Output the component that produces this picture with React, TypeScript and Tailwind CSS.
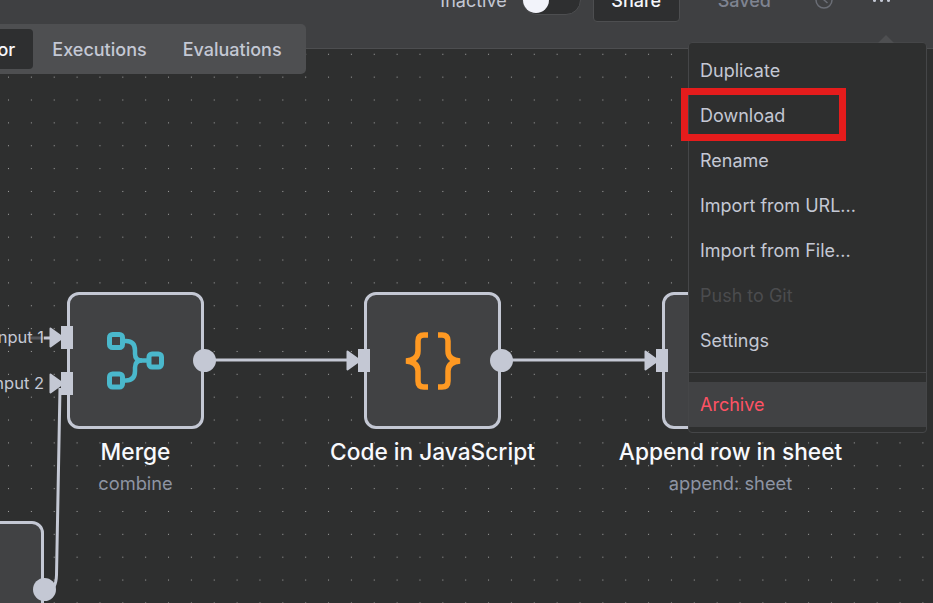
import React from "react";

const font = { fontFamily: "Inter, 'Noto Sans', sans-serif" };

function InPort({ label, top }: { label?: string; top: number }) {
  return (
    <div className="absolute left-[-9px] w-[12px] h-[23px] bg-[#c4c8d4]" style={{ top }}>
      <svg className="absolute left-[-12px] top-0 overflow-visible" width="12" height="23" viewBox="0 0 12 23">
        <path d="M1.5 2.5 L14 11.5 L1.5 20.5 Z" fill="#c4c8d4" stroke="#c4c8d4" strokeWidth="2" strokeLinejoin="round" />
      </svg>
      {label && (
        <span className="absolute right-[29px] top-0 whitespace-nowrap text-[16.5px] leading-[23px] text-[#c4c8d4]">{label}</span>
      )}
    </div>
  );
}

function Node({
  x,
  y,
  title,
  sub,
  icon,
  inputs,
  output,
}: {
  x: number;
  y: number;
  title?: string;
  sub?: string;
  icon?: React.ReactNode;
  inputs?: { label?: string; top: number }[];
  output?: boolean;
}) {
  return (
    <div
      className="absolute w-[137px] h-[137px] rounded-[12px] border-[3px] border-[#c4c8d4] bg-[#414244] flex items-center justify-center"
      style={{ left: x, top: y }}
    >
      {icon}
      {inputs?.map((p, i) => <InPort key={i} {...p} />)}
      {output && <div className="absolute right-[-15px] top-[54px] w-[23px] h-[23px] rounded-full bg-[#c4c8d4]" />}
      {title && (
        <div className="absolute top-[142px] left-1/2 -translate-x-1/2 flex flex-col items-center whitespace-nowrap">
          <span className="text-[22.7px] leading-[30px] font-medium text-[#f8f9fd]">{title}</span>
          {sub && <span className="text-[18.3px] leading-[30px] mt-[1px] text-[#8d94a3]">{sub}</span>}
        </div>
      )}
    </div>
  );
}

function MergeIcon() {
  return (
    <svg width="60" height="60" viewBox="0 0 60 60" fill="none" stroke="#4ab8cc" strokeWidth="5">
      <rect x="3.5" y="3.5" width="13" height="13" rx="3" />
      <rect x="43" y="23" width="12.5" height="13" rx="3" />
      <rect x="3.5" y="43" width="13" height="13" rx="3" />
      <path d="M16 10 H20 Q29 10 29 19.5 V23 Q29 29.5 36 29.5 H43" strokeWidth="4.5" />
      <path d="M36 29.5 Q29 29.5 29 36.5 V40 Q29 49.5 20 49.5 H16" strokeWidth="4.5" />
    </svg>
  );
}

function BracesIcon() {
  return (
    <svg width="56" height="58" viewBox="0 0 56 58" fill="none" stroke="#ff9922" strokeWidth="5.5">
      <path d="M23 3 H19 Q13 3 13 9 V19 Q13 28 1 29 Q13 30 13 39 V49 Q13 55 19 55 H23" />
      <path d="M33 3 H37 Q43 3 43 9 V19 Q43 28 55 29 Q43 30 43 39 V49 Q43 55 37 55 H33" />
    </svg>
  );
}

const items = ["Duplicate", "Download", "Rename", "Import from URL...", "Import from File..."];

export default function App() {
  return (
    <div className="relative w-[933px] h-[603px] overflow-hidden flex flex-col bg-[#2e2f2f]" style={font}>
      <header className="box-border h-[49px] pb-[48px] flex items-center justify-end bg-[#3f4042] border-b border-[#4d4e50] text-[18px]">
        <span className="text-[#c4c8d4] mr-[15px]">Inactive</span>
        <div className="relative w-[59px] h-[30px] rounded-full bg-[#2e2f30] border border-[#4d4e50] mr-[12px]">
          <div className="absolute left-[0px] top-[1px] w-[26px] h-[26px] rounded-full bg-[#f2f3fa]" />
        </div>
        <div className="w-[87px] h-[43px] mr-[38px] rounded-[4px] bg-[#2e2f30] border border-[#4d4e50] flex items-center justify-center font-medium text-[#f5f6fa]">
          Share
        </div>
        <span className="font-medium text-[#7f8491] mr-[43px]">Saved</span>
        <svg className="mr-[39px]" width="20" height="20" viewBox="0 0 20 20" fill="none" stroke="#6b6e76" strokeWidth="1.5">
          <circle cx="10" cy="10" r="8" />
          <path d="M10 5 V10 L13.5 13" />
        </svg>
        <div className="flex gap-[4px] mr-[43px]">
          <i className="w-[3px] h-[3px] rounded-full bg-[#c4c8d4]" />
          <i className="w-[3px] h-[3px] rounded-full bg-[#c4c8d4]" />
          <i className="w-[3px] h-[3px] rounded-full bg-[#c4c8d4]" />
        </div>
      </header>

      <main className="relative flex-1 bg-[radial-gradient(circle,#a0a0a0_0.7px,transparent_1px)] bg-[length:22.86px_22.86px] bg-[position:-2.93px_-6.15px]">
        <svg className="absolute left-0 top-[-49px]" width="933" height="603" fill="none" stroke="#c4c8d4" strokeWidth="3">
          <path d="M204 360 H350" />
          <path d="M501 360 H648" />
          <path d="M28 338 H44" stroke="#55565a" />
          <path d="M44 338 H50" />
          <path d="M48 590 Q56 590 56.5 575 L60 388" />
        </svg>
        <Node x={-93} y={472} output />
        <Node x={67} y={243} title="Merge" sub="combine" icon={<MergeIcon />} output
          inputs={[{ label: "Input 1", top: 31 }, { label: "Input 2", top: 77 }]} />
        <Node x={364} y={243} title="Code in JavaScript" icon={<BracesIcon />} output inputs={[{ top: 54 }]} />
        <Node x={662} y={243} title="Append row in sheet" sub="append: sheet" inputs={[{ top: 54 }]} />
      </main>

      <nav className="absolute left-[-58px] top-[24px] h-[50px] p-[5px] pr-[6px] flex items-center rounded-[5px] bg-[#4e4f51] text-[18px] font-medium">
        <span className="h-[40px] px-[18px] flex items-center rounded-[4px] bg-[#2e2f30] text-[#f5f6fa] mr-[1px]">Editor</span>
        <span className="h-[40px] px-[18px] flex items-center text-[#c4c8d4]">Executions</span>
        <span className="h-[40px] px-[18px] flex items-center text-[#c4c8d4]">Evaluations</span>
      </nav>

      <div className="absolute left-[688px] top-[42px] w-[239px] h-[391px] rounded-[4px] bg-[#2e2f2f] border border-[#454648] pt-[5px] text-[18px] text-[#c4c8d4]">
        <svg className="absolute left-[187px] top-[-9px]" width="20" height="9" viewBox="0 0 20 9">
          <path d="M2 9 L10 1 L18 9 Z" fill="#4e4f51" />
        </svg>
        {items.map((t) => (
          <div key={t} className="h-[45px] px-[11px] flex items-center">{t}</div>
        ))}
        <div className="h-[45px] px-[11px] flex items-center text-[#4b4c4e]">Push to Git</div>
        <div className="h-[45px] px-[11px] flex items-center">Settings</div>
        <div className="mt-[9px] mb-[9px] border-t border-[#454648]" />
        <div className="h-[45px] px-[11px] flex items-center bg-[#414244] text-[#ff5264]">Archive</div>
      </div>

      <div className="absolute left-[681px] top-[88px] w-[165px] h-[53px] border-[7px] border-[#e51c1c]" />
    </div>
  );
}
